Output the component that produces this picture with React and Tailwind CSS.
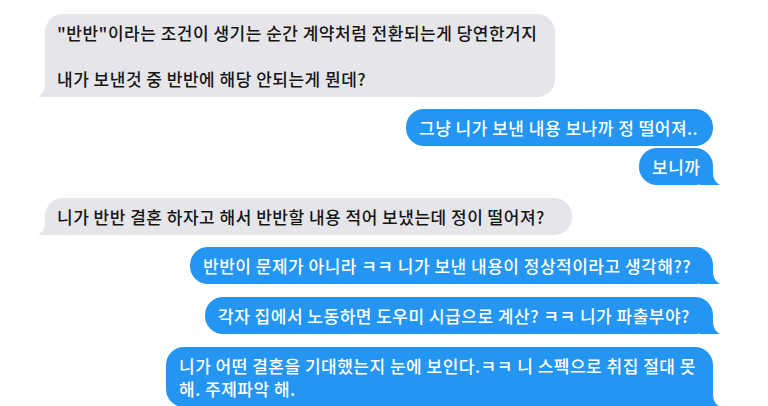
import React from 'react';

// Left (received) bubble tail
const TailLeft = ({ color }) => (
  <svg className="absolute left-[-7px] bottom-0" width="20" height="20" viewBox="0 0 20 20">
    <path d="M7 0 H20 V20 H12 C8 20.4 3.5 20.3 0 19.6 C4.5 17.5 7 13.5 7 7 Z" fill={color} />
  </svg>
);

// Right (sent) bubble tail
const TailRight = ({ color }) => (
  <svg className="absolute right-[-7px] bottom-0" width="20" height="20" viewBox="0 0 20 20">
    <path d="M13 0 H0 V20 H8 C12 20.4 16.5 20.3 20 19.6 C15.5 17.5 13 13.5 13 7 Z" fill={color} />
  </svg>
);

const Received = ({ children, className = '' }) => (
  <div className={`relative self-start ml-[45px] rounded-[18px] bg-[#e5e5ea] pl-[12px] py-[7px] text-[#151515] whitespace-nowrap ${className}`}>
    <span className="relative z-10">{children}</span>
    <TailLeft color="#e5e5ea" />
  </div>
);

const Sent = ({ children, tail = true, className = '' }) => (
  <div className={`relative self-end mr-[55px] rounded-[18px] bg-[#2496f2] pl-[13px] py-[7px] text-white whitespace-nowrap ${className}`}>
    <span className="relative z-10">{children}</span>
    {tail && <TailRight color="#2496f2" />}
  </div>
);

export default function App() {
  return (
    <div className="w-[768px] h-[406px] overflow-hidden bg-white flex flex-col pt-[14px] font-['Noto_Sans_CJK_KR','Noto_Sans',sans-serif] font-medium text-[17px] tracking-[0.5px] leading-[23px]">
      <Received className="w-[510px]">
        "반반"이라는 조건이 생기는 순간 계약처럼 전환되는게 당연한거지
        <br />
        <br />
        내가 보낸것 중 반반에 해당 안되는게 뭔데?
      </Received>

      <Sent tail={false} className="mt-[12px] w-[307px]">그냥 니가 보낸 내용 보나까 정 떨어져..</Sent>
      <Sent className="mt-[2px] w-[74px]">보니까</Sent>

      <Received className="mt-[13px] w-[527px]">니가 반반 결혼 하자고 해서 반반할 내용 적어 보냈는데 정이 떨어져?</Received>

      <Sent className="mt-[12px] w-[523px]">반반이 문제가 아니라 ㅋㅋ 니가 보낸 내용이 정상적이라고 생각해??</Sent>
      <Sent className="mt-[13px] w-[508px]">각자 집에서 노동하면 도우미 시급으로 계산? ㅋㅋ 니가 파출부야?</Sent>
      <Sent className="mt-[13px] w-[547px]">
        니가 어떤 결혼을 기대했는지 눈에 보인다.ㅋㅋ 니 스펙으로 취집 절대 못
        <br />
        해. 주제파악 해.
      </Sent>
    </div>
  );
}
